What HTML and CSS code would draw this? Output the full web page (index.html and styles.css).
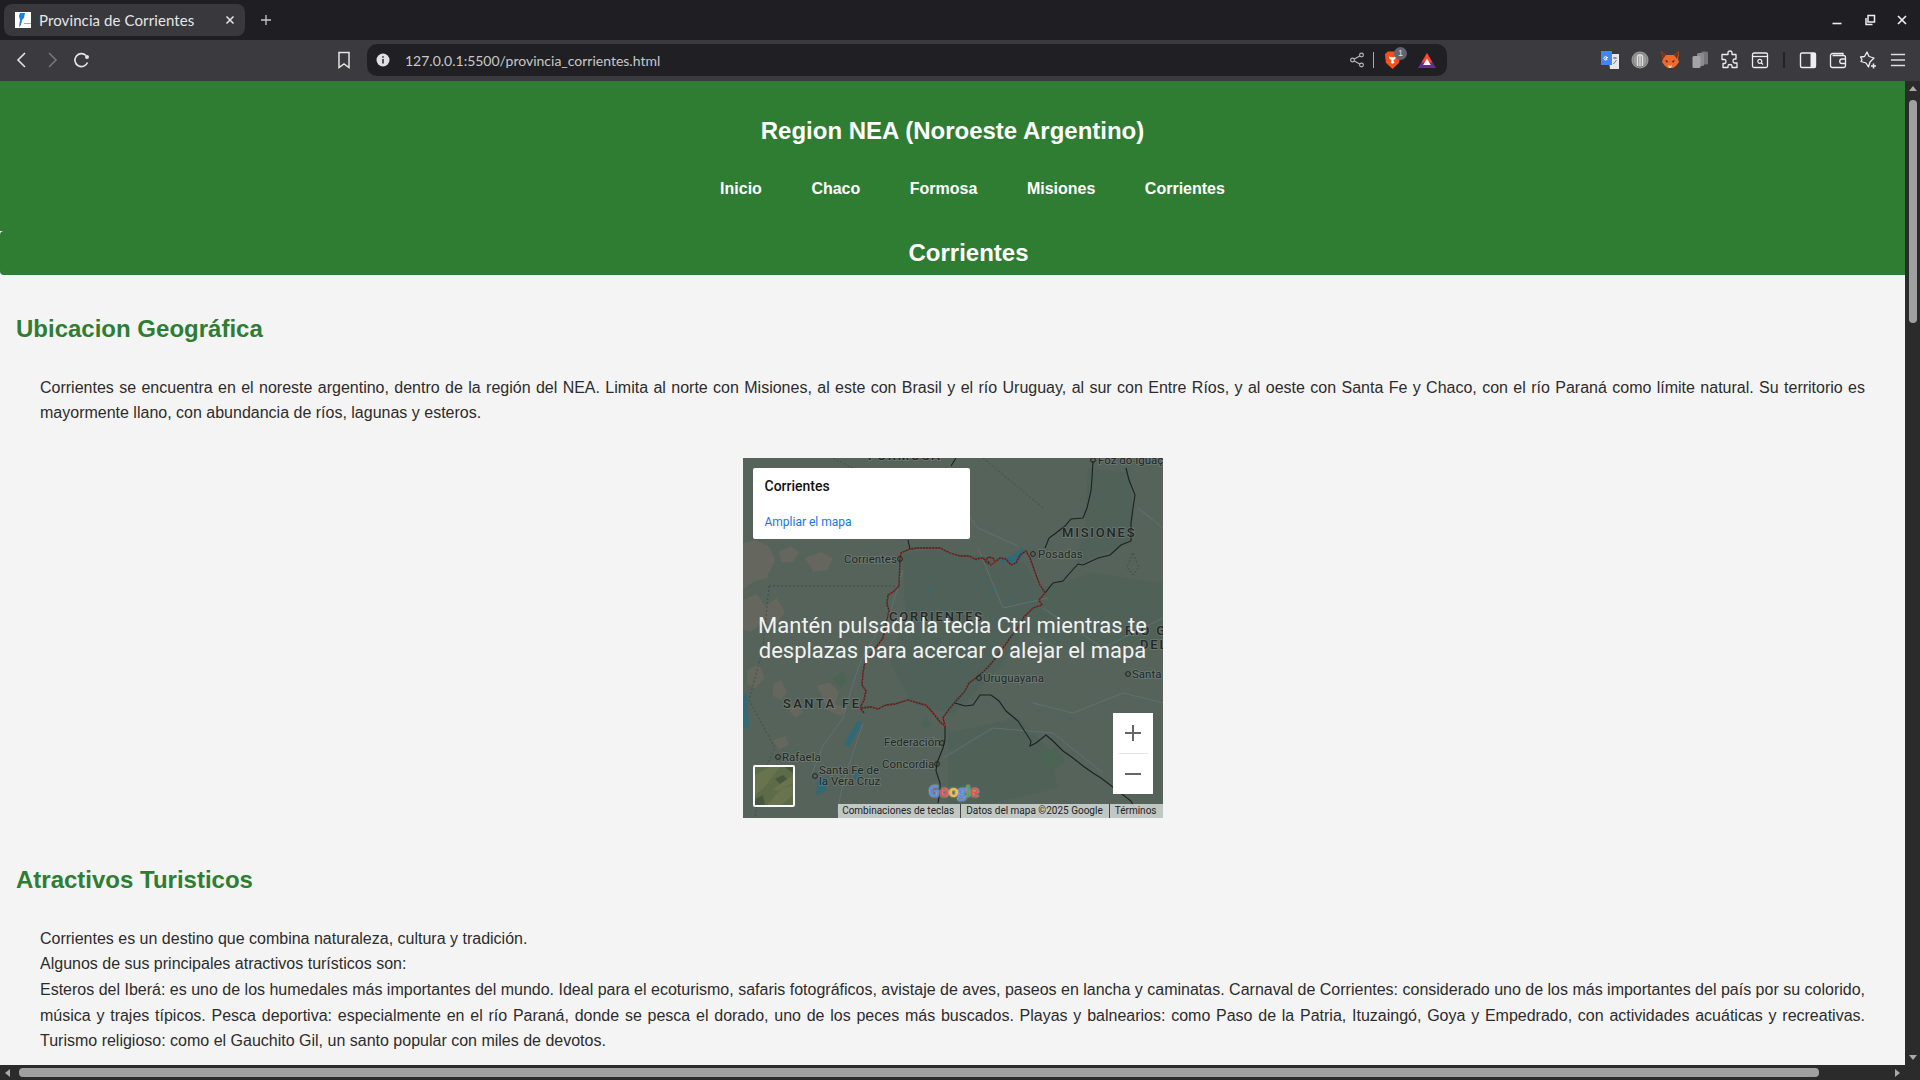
FILE: index.html
```html
<!DOCTYPE html>
<html lang="es">

<head>
  <meta charset="UTF-8">
  <title>Provincia de Corrientes</title>
  <link rel="stylesheet" href="styles.css">
</head>

<body>
  <div class="browser">

    <!-- Tabs -->
    <div class="tabstrip">
      <div class="tab">
        <svg class="favicon" viewBox="0 0 16 16">
          <rect width="16" height="16" fill="#fff"/>
          <path d="M5 1h5L9 6 7 8 6 13 4 15 5 8 4 4z" fill="#1c7fd6"/>
          <path d="M9 11h7v1H9z" fill="#9aa"/>
        </svg>
        <span class="tab-title">Provincia de Corrientes</span>
        <svg class="tab-close" viewBox="0 0 10 10"><path d="M1.500 1.500l7 7M8.500 1.500l-7 7" stroke="#e8e8e8" stroke-width="1.500"/></svg>
      </div>
      <svg class="tab-new" viewBox="0 0 12 12"><path d="M6 1v10M1 6h10" stroke="#c8c8c8" stroke-width="1.300"/></svg>
      <div class="window-btns">
        <svg viewBox="0 0 12 12"><path d="M1.500 9.500h9" stroke="#eee" stroke-width="1.600"/></svg>
        <svg viewBox="0 0 12 12"><path d="M4 1.500h6.500v6.500H4zM2 4v6.500h6.500" fill="none" stroke="#eee" stroke-width="1.500"/></svg>
        <svg viewBox="0 0 12 12"><path d="M2 2l8 8M10 2l-8 8" stroke="#eee" stroke-width="1.700"/></svg>
      </div>
    </div>

    <!-- Toolbar -->
    <div class="toolbar">
      <div class="tool-btn"><svg viewBox="0 0 20 20"><path d="M13 3l-7 7 7 7" fill="none" stroke="#e4e4e4" stroke-width="1.600"/></svg></div>
      <div class="tool-btn"><svg viewBox="0 0 20 20"><path d="M7 3l7 7-7 7" fill="none" stroke="#77777b" stroke-width="1.600"/></svg></div>
      <div class="tool-btn"><svg viewBox="0 0 20 20"><path d="M15.500 12.500A6.500 6.500 0 1 1 14 5.500" fill="none" stroke="#e4e4e4" stroke-width="1.600"/><circle cx="15" cy="7" r="2" fill="#e4e4e4"/></svg></div>
      <div class="tool-btn bookmark"><svg viewBox="0 0 20 20"><path d="M5 2.500h10v15l-5-3.500-5 3.500z" fill="none" stroke="#e4e4e4" stroke-width="1.500"/></svg></div>

      <div class="urlbar">
        <svg class="url-info" viewBox="0 0 14 14"><circle cx="7" cy="7" r="6.500" fill="#e0e0e0"/><path d="M7 6v4.500M7 3.300v1.500" stroke="#222" stroke-width="1.500"/></svg>
        <span class="url-text">127.0.0.1:5500/provincia_corrientes.html</span>
        <svg class="url-share" viewBox="0 0 16 16"><path d="M12.500 3L3.500 8l9 5" fill="none" stroke="#bbb" stroke-width="1.100"/><circle cx="12.500" cy="3" r="1.900" fill="#202024" stroke="#bbb" stroke-width="1.100"/><circle cx="3.500" cy="8" r="1.900" fill="#202024" stroke="#bbb" stroke-width="1.100"/><circle cx="12.500" cy="13" r="1.900" fill="#202024" stroke="#bbb" stroke-width="1.100"/></svg>
        <span class="url-sep"></span>
        <div class="brave">
          <svg viewBox="0 0 18 20"><path d="M4 1h10l3 3-1 9-7 6.500L2 13 1 4z" fill="#f4511e"/><path d="M5 6l3 1h2l3-1-1 3-2 1 1 3-2 1-2-1 1-3-2-1z" fill="#fff"/></svg>
          <span class="brave-badge">1</span>
        </div>
        <svg class="bat" viewBox="0 0 18 15"><path d="M9 0l9 15H0z" fill="#662d91"/><path d="M9 0l5.500 9.500h-11z" fill="#ff4724"/><path d="M9 5.500l3.800 6.500H5.200z" fill="#fff"/></svg>
      </div>

      <div class="ext-icons">
        <div class="tool-btn"><svg viewBox="0 0 20 20"><path d="M8 4h11v15H10z" fill="#e8e8e8"/><path d="M13 8h4M15 7v2M13.500 14l3-4" stroke="#777" stroke-width="1"/><path d="M1 1h11v14H1z" fill="#4285f4"/><path d="M8 7.500H6v1.500h1.200a1.700 1.700 0 1 1-.5-2" fill="none" stroke="#fff" stroke-width="1"/></svg></div>
        <div class="tool-btn"><svg viewBox="0 0 20 20"><circle cx="10" cy="10" r="8.500" fill="#9c9c9c"/><circle cx="10" cy="10" r="7" fill="none" stroke="#777" stroke-width=".8"/><path d="M7.500 16V7c0-3 5-3 5 0v9M10 5v11" fill="none" stroke="#e2e2e2" stroke-width="1.200"/></svg></div>
        <div class="tool-btn"><svg viewBox="0 0 20 20"><path d="M1 1l5 4h8l5-4-1 8 1 3-3 4-3 2H8l-3-2-3-4 1-3z" fill="#f0692a"/><path d="M1 1l5 4-3 4zM19 1l-5 4 3 4z" fill="#7a3410"/><path d="M5 10l3 1-1 2zM15 10l-3 1 1 2z" fill="#3a2a20"/><path d="M8 15l2 1 2-1-1 3H9z" fill="#dcd2c8"/></svg></div>
        <div class="tool-btn"><svg viewBox="0 0 20 20"><rect x="11" y="1.500" width="7" height="13" rx="1.500" fill="#77777a"/><rect x="7" y="3" width="7" height="13" rx="1.500" fill="#8c8c8e"/><rect x="2.500" y="6" width="8" height="12" rx="1.500" fill="#a4a4a6"/></svg></div>
        <div class="tool-btn"><svg viewBox="0 0 20 20"><path d="M8 2.500c0-2 4-2 4 0v2h4v4.500h-1.500c-2 0-2 4 0 4H17v4.500h-5v-1.500c0-2-4-2-4 0v1.500H3v-4h1.500c2 0 2-4 0-4H2v-5h6z" fill="none" stroke="#eee" stroke-width="1.300" stroke-linejoin="round"/></svg></div>
        <div class="tool-btn"><svg viewBox="0 0 20 20"><rect x="2.500" y="3" width="15" height="14.500" rx="1.500" fill="none" stroke="#eee" stroke-width="1.300"/><path d="M2.500 6.500h15" stroke="#eee" stroke-width="1.300"/><circle cx="9.800" cy="11.300" r="2" fill="none" stroke="#eee" stroke-width="1.200"/><path d="M11.300 12.800l1.700 1.700" stroke="#eee" stroke-width="1.200"/></svg></div>
        <span class="tool-sep"></span>
        <div class="tool-btn"><svg viewBox="0 0 20 20"><rect x="2.500" y="3" width="15" height="14.500" rx="1.500" fill="none" stroke="#eee" stroke-width="1.400"/><rect x="12.500" y="3" width="5" height="14.500" fill="#eee"/></svg></div>
        <div class="tool-btn"><svg viewBox="0 0 20 20"><path d="M15 5.500V3.500H4.500a2 2 0 0 0-2 2v10a2 2 0 0 0 2 2h11a2 2 0 0 0 2-2v-8a2 2 0 0 0-2-2H4.500" fill="none" stroke="#eee" stroke-width="1.300"/><path d="M17.500 9H14a2 2 0 0 0 0 4.500h3.500" fill="none" stroke="#eee" stroke-width="1.300"/></svg></div>
        <div class="tool-btn"><svg viewBox="0 0 20 20"><path d="M9 2l2 4.500 5 1.500-4 4-1.500 5L8 13 3 11.500l1-2L2.500 7l4-.5z" fill="none" stroke="#eee" stroke-width="1.300" stroke-linejoin="round"/><path d="M15.500 13.500v5M13 16h5" stroke="#eee" stroke-width="1.500"/></svg></div>
        <div class="tool-btn"><svg viewBox="0 0 20 20"><path d="M3 4.500h14M3 10h14M3 15.500h14" stroke="#ddd" stroke-width="1.500"/></svg></div>
      </div>
    </div>

    <!-- Page -->
    <div class="viewport">
      <div class="page">
        <header class="site-header">
          <h1>Region NEA (Noroeste Argentino)</h1>
          <nav>
            <ul class="site-nav">
              <li><a href="#">Inicio</a></li>
              <li><a href="#">Chaco</a></li>
              <li><a href="#">Formosa</a></li>
              <li><a href="#">Misiones</a></li>
              <li><a href="#">Corrientes</a></li>
            </ul>
          </nav>
        </header>
        <h2 class="province-title">Corrientes</h2>

        <main>
          <h2 class="section-title">Ubicacion Geográfica</h2>
          <p class="section-text">Corrientes se encuentra en el noreste argentino, dentro de la región del NEA. Limita al norte con Misiones, al este con Brasil y el río Uruguay, al sur con Entre Ríos, y al oeste con Santa Fe y Chaco, con el río Paraná como límite natural. Su territorio es mayormente llano, con abundancia de ríos, lagunas y esteros.</p>

          <div class="map">
            <svg class="map-base" viewBox="0 0 420 360">
              <defs>
                <path id="limit" d="M157 100L158 95 167 91 175 90 190 90 197 90 207 95 217 98 226 98 232 101 240 100 243 104 248 107 252 104 250 100 246 99 243 101 248 107 257 100 263 101 268 107 273 105 277 97 283 93 287 100 293 117 297 127 302 135 296 142 299 147 290 150 285 155 281 159 274 171 267 180 258 193 247 207 240 214 233 220 226 225 222 233 213 243 207 250 200 260 202 268M157 100L156 128 150 134 145 137 144 146 146 153 142 170 140 180 131 192 122 203 120 215 119 227 123 233 121 242 117 250 121 255M117 250L128 249 135 251 143 247 152 246 165 242 175 245 183 247 190 255 197 264 202 268"/>
              </defs>
              <rect width="420" height="360" fill="#55635b"/>
              <!-- land patches -->
              <path class="map-patch" d="M0 85l12-3 14 6 6 14-8 18-14 4-10 8zM36 94l12-6 8 6-6 10-12 0zM62 100l16-6 12 6-6 12-14 2zM0 142l14-6 8 12 12-8 8 14-10 14-12-4-12 10-8-2zM4 212l12-6 6 14-10 10-8-4zM30 226l8-4 6 12-6 8-8-4zM74 228l12-4 10 10-4 12 12 4-6 8-14-6-4-12zM44 250l10-4 6 8-8 6zM30 282l12-4 4 8-10 6z"/>
              <path class="map-green" d="M345 10l40 5 6 40-6 28-26 14-25 8 8-40zM300 130l50-15 70 10v60l-90 10-50-25zM205 275l70-15 30 30 10 40-110 25z"/>
              <path class="map-teal" d="M160 96l30-4 90 12 20 32-40 70-50 50-40-10-22-40 14-50z"/>
              <path class="map-dark" d="M300 295l14-6 8 14-10 8-12-4zM90 220l10-6 4 10-8 6zM178 265l6-6 4 8-6 4z"/>
              <!-- water -->
              <path class="map-water" d="M0 238l4-2 2 32-6 4zM101 286l14-24 4 3-13 24zM75 323l10-5-2 14-10 6zM110 318l6-8 2 4-6 8z"/>
              <path class="map-water" d="M257 100l12-2 10-8 4 3-6 8-7 6-5-4-6 1z"/>
              <path class="map-water" d="M248 130l4 4-5 1zM183 134l6-6-4 8zM268 137l2 6-3-1z"/>
              <!-- rivers -->
              <path class="map-river" d="M125 10l30 50 10 22M205 30l30 40 40 18M160 112l-12 40-30 50-10 30-8 28-20 28-12 30M235 90l25 60 45-10M300 150l60 40 60-30M290 245l40 10 50-20 40 10M200 300l50-30 60 5 50 40M395 50l25 20M120 265l-20 60-6 30"/>
              <!-- dashed lines -->
              <path class="map-dash" d="M26 128H155M26 128l-6 62-14 52 26 48-14 30-6 40M240 0l60 50M390 95l-6 14 6 8 6-8zM90 0l20 10"/>
              <!-- borders -->
              <path class="map-border" d="M350 3L349 20 348 33 344 50 340 60 328 61 322 68 313 75 306 80 302 90M383 10L386 22 392 37 390 50 388 65 388 83 378 87 367 97 355 100 340 107 335 106 325 117 320 123 310 125 302 135M212 245L222 248 230 247 237 237 248 237 256 243 263 253 275 263 288 283 287 288 293 285 303 277 310 283 320 293 330 300 340 308 350 315 358 320 375 333 388 343 393 353M202 268L202 282 200 290 194 305 193 313 197 325 197 333 195 345M213 0L208 8M165 82L167 91"/>
              <use class="map-limit-under" href="#limit"/>
              <use class="map-limit" href="#limit"/>
              <!-- labels -->
              <text class="map-label-big" x="125" y="2">FORMOSA</text>
              <text class="map-label-big" x="319" y="79">MISIONES</text>
              <text class="map-label-big" x="146" y="163">CORRIENTES</text>
              <text class="map-label-big label-wide" x="40" y="250">SANTA FE</text>
              <text class="map-label-big" x="382" y="177">RÍO G</text>
              <text class="map-label-big" x="397" y="191">DEL</text>
              <text class="map-label" x="355" y="6">Foz do Iguaçu</text>
              <text class="map-label" x="101" y="105">Corrientes</text>
              <text class="map-label" x="295" y="100">Posadas</text>
              <text class="map-label" x="240" y="224">Uruguayana</text>
              <text class="map-label" x="389" y="220">Santa</text>
              <text class="map-label" x="141" y="288">Federación</text>
              <text class="map-label" x="139" y="310">Concordia</text>
              <text class="map-label" x="39" y="303">Rafaela</text>
              <text class="map-label" x="76" y="316">Santa Fe de</text>
              <text class="map-label" x="76" y="327">la Vera Cruz</text>
              <!-- city dots -->
              <circle class="map-dot" cx="157" cy="101" r="2.400"/>
              <circle class="map-dot" cx="290" cy="96" r="2.400"/>
              <circle class="map-dot" cx="236" cy="220" r="2.400"/>
              <circle class="map-dot" cx="385" cy="216" r="2.400"/>
              <circle class="map-dot" cx="199" cy="285" r="2.400"/>
              <circle class="map-dot" cx="194" cy="306" r="2.400"/>
              <circle class="map-dot" cx="35" cy="299" r="2.400"/>
              <circle class="map-dot" cx="72" cy="318" r="2.400"/>
              <circle class="map-dot" cx="350" cy="2" r="2.400"/>
            </svg>

            <div class="map-veil">Mantén pulsada la tecla Ctrl mientras te desplazas para acercar o alejar el mapa</div>

            <div class="map-card">
              <div class="map-card-title">Corrientes</div>
              <a class="map-card-link" href="#">Ampliar el mapa</a>
            </div>

            <div class="map-thumb">
              <svg viewBox="0 0 38 38"><rect width="38" height="38" fill="#5d6b48"/><path d="M0 8l15-8h10L8 22 0 28zM38 8v8L22 24l-4-2zM12 38l14-16 12-4v10l-12 10z" fill="#69744f"/><path d="M20 12l8-4 4 4-7 5zM0 32l8-4 2 10H0zM30 0h8v6z" fill="#47563c"/></svg>
            </div>

            <div class="map-zoom">
              <div class="map-zoom-btn"><svg viewBox="0 0 18 18"><path d="M9 1v16M1 9h16" stroke="#666" stroke-width="2"/></svg></div>
              <div class="map-zoom-line"></div>
              <div class="map-zoom-btn"><svg viewBox="0 0 18 18"><path d="M1 9h16" stroke="#666" stroke-width="2"/></svg></div>
            </div>

            <div class="map-google"><span class="g-blue">G</span><span class="g-red">o</span><span class="g-yellow">o</span><span class="g-blue">g</span><span class="g-green">l</span><span class="g-red">e</span></div>

            <div class="map-footer">
              <span>Combinaciones de teclas</span>
              <span>Datos del mapa ©2025 Google</span>
              <span>Términos</span>
            </div>
          </div>

          <h2 class="section-title section-second">Atractivos Turisticos</h2>
          <p class="section-text">Corrientes es un destino que combina naturaleza, cultura y tradición.<br>
            Algunos de sus principales atractivos turísticos son:<br>
            Esteros del Iberá: es uno de los humedales más importantes del mundo. Ideal para el ecoturismo, safaris fotográficos, avistaje de aves, paseos en lancha y caminatas. Carnaval de Corrientes: considerado uno de los más importantes del país por su colorido, música y trajes típicos. Pesca deportiva: especialmente en el río Paraná, donde se pesca el dorado, uno de los peces más buscados. Playas y balnearios: como Paso de la Patria, Ituzaingó, Goya y Empedrado, con actividades acuáticas y recreativas. Turismo religioso: como el Gauchito Gil, un santo popular con miles de devotos.</p>
        </main>
      </div>

      <div class="vscroll">
        <span class="arrow-up"></span>
        <div class="vscroll-track"><div class="vscroll-thumb"></div></div>
        <span class="arrow-down"></span>
      </div>
    </div>

    <div class="hscroll">
      <span class="arrow-left"></span>
      <div class="hscroll-track"><div class="hscroll-thumb"></div></div>
      <span class="arrow-right"></span>
      <span class="hscroll-corner"></span>
    </div>

  </div>
</body>

</html>
```

FILE: styles.css
```css
* {
  box-sizing: border-box;
}

html,
body {
  margin: 0;
  height: 100%;
  overflow: hidden;
}

body {
  font-family: "Liberation Sans", Arial, sans-serif;
  background: #f4f4f4;
  color: #2c2c2c;
}

.browser {
  display: flex;
  flex-direction: column;
  height: 1080px;
}

/* Tabs */

.tabstrip {
  display: flex;
  align-items: center;
  height: 40px;
  flex: none;
  padding: 4px 0 4px 4px;
  background: #1f1f23;
}

.tab {
  display: flex;
  align-items: center;
  width: 241px;
  height: 32px;
  padding: 0 10px 0 11px;
  border-radius: 8px;
  background: #38383d;
}

.favicon {
  width: 16px;
  height: 16px;
  flex: none;
}

.tab-title {
  flex: 1;
  margin-left: 8px;
  padding-bottom: 1px;
  font-family: Lato, sans-serif;
  font-size: 15px;
  letter-spacing: 0.1px;
  color: #e6e6e6;
  white-space: nowrap;
}

.tab-close {
  width: 10px;
  height: 10px;
}

.tab-new {
  width: 12px;
  height: 12px;
  margin-left: 15px;
}

.window-btns {
  display: flex;
  gap: 20.500px;
  margin-left: auto;
  padding-right: 12px;
}

.window-btns svg {
  width: 12px;
  height: 12px;
}

/* Toolbar */

.toolbar {
  display: flex;
  align-items: center;
  height: 41px;
  flex: none;
  padding: 0 0 1px 7px;
  background: #3a3a3f;
}

.tool-btn {
  display: flex;
  align-items: center;
  justify-content: center;
  width: 30px;
  height: 30px;
  flex: none;
}

.tool-btn svg {
  width: 20px;
  height: 20px;
}

.bookmark {
  margin-left: 232px;
}

.urlbar {
  display: flex;
  align-items: center;
  width: 1080px;
  height: 32px;
  margin-left: 8px;
  padding: 0 11px 0 9px;
  border-radius: 10px;
  background: #202024;
}

.url-info {
  width: 14px;
  height: 14px;
}

.url-text {
  flex: 1;
  margin-left: 15px;
  font-family: Lato, sans-serif;
  font-size: 14px;
  color: #c8c8c8;
}

.url-share {
  width: 16px;
  height: 16px;
}

.url-sep {
  width: 1px;
  height: 16px;
  margin: 0 10px 0 8px;
  background: #aaa;
}

.brave {
  position: relative;
  width: 18px;
  height: 20px;
}

.brave svg {
  display: block;
  width: 17px;
  height: 20px;
}

.brave-badge {
  position: absolute;
  top: -3px;
  left: 10px;
  width: 13px;
  height: 13px;
  border-radius: 50%;
  background: #63646e;
  color: #ddd;
  font-size: 9px;
  line-height: 13px;
  text-align: center;
}

.bat {
  width: 18px;
  height: 15px;
  margin-left: 16px;
}

.ext-icons {
  display: flex;
  align-items: center;
  margin-left: 148px;
}

.tool-sep {
  width: 2px;
  height: 16px;
  margin: 0 8px;
  background: #222;
}

/* Page */

.viewport {
  display: flex;
  flex: 1;
  min-height: 0;
}

.page {
  flex: 1;
  min-width: 0;
  overflow: hidden;
  background: #f4f4f4;
}

.site-header {
  height: 150px;
  padding-top: 34px;
  background: #2e7d32;
  color: #fff;
  text-align: center;
}

.site-header h1 {
  margin: 0;
  font-size: 24px;
  line-height: 32px;
}

.site-nav {
  display: flex;
  justify-content: center;
  gap: 49.500px;
  margin: 33px 0 0;
  padding: 0 0 0 40px;
  list-style: none;
}

.site-nav a {
  color: #fff;
  font-size: 16px;
  font-weight: bold;
  line-height: 18px;
  text-decoration: none;
}

.province-title {
  width: calc(100% + 32px);
  height: 44px;
  margin: 0;
  border-radius: 4px;
  background: #2e7d32;
  color: #fff;
  font-size: 24px;
  line-height: 44px;
  text-align: center;
}

.section-title {
  margin: 0;
  padding: 40px 0 0 16px;
  color: #2e7d32;
  font-size: 24px;
  line-height: 28px;
}

.section-second {
  padding-top: 48px;
}

.section-text {
  margin: 31.700px 40px 0;
  font-size: 16px;
  line-height: 25.600px;
  text-align: justify;
}

/* Map */

.map {
  position: relative;
  width: 420px;
  height: 360px;
  margin: 32.300px auto 0;
  overflow: hidden;
  font-family: Roboto, sans-serif;
}

.map-base {
  display: block;
  width: 420px;
  height: 360px;
}

.map-patch {
  fill: #65665d;
}

.map-green {
  fill: #4f6157;
  opacity: 0.7;
}

.map-teal {
  fill: #506159;
}

.map-dark {
  fill: #4c6454;
}

.map-water {
  fill: #2f6a78;
}

.map-river {
  fill: none;
  stroke: #62747a;
  stroke-width: 0.8;
}

.map-dash {
  fill: none;
  stroke: #3a4340;
  stroke-width: 0.7;
  stroke-dasharray: 2 2;
}

.map-border {
  fill: none;
  stroke: #1c2120;
  stroke-width: 1.100;
}

.map-limit-under {
  fill: none;
  stroke: #2f2b28;
  stroke-width: 1.300;
}

.map-limit {
  fill: none;
  stroke: #a5302a;
  stroke-width: 1.300;
  stroke-dasharray: 1.500 1.500;
}

.map-dot {
  fill: none;
  stroke: #1f2422;
  stroke-width: 1;
}

.map-label,
.map-label-big {
  font-family: Roboto, sans-serif;
  fill: #232625;
  paint-order: stroke;
  stroke: rgba(255, 255, 255, 0.12);
  stroke-width: 2px;
}

.map-label {
  font-size: 11.500px;
}

.map-label-big {
  font-size: 13px;
  font-weight: 500;
  letter-spacing: 1.800px;
}

.label-wide {
  letter-spacing: 2.400px;
}

.map-veil {
  position: absolute;
  top: 0;
  left: 0;
  display: flex;
  align-items: center;
  width: 100%;
  height: 100%;
  padding: 0 14px;
  color: #fff;
  font-size: 22px;
  line-height: 25px;
  text-align: center;
  opacity: 0.92;
}

.map-card {
  position: absolute;
  top: 10px;
  left: 10px;
  width: 217px;
  height: 71px;
  padding: 8px 12px;
  border-radius: 2px;
  background: #fff;
}

.map-card-title {
  color: #111;
  font-size: 14px;
  font-weight: 500;
  line-height: 20px;
}

.map-card-link {
  display: block;
  margin-top: 19px;
  color: #1a73e8;
  font-size: 12px;
  line-height: 14px;
  text-decoration: none;
}

.map-thumb {
  position: absolute;
  top: 307px;
  left: 10px;
  width: 42px;
  height: 42px;
  border: 2px solid #fff;
  border-radius: 2px;
  overflow: hidden;
}

.map-thumb svg {
  display: block;
  width: 38px;
  height: 38px;
}

.map-zoom {
  position: absolute;
  top: 255px;
  left: 370px;
  display: flex;
  flex-direction: column;
  align-items: center;
  width: 40px;
  height: 81px;
  background: #fff;
}

.map-zoom-btn {
  display: flex;
  align-items: center;
  justify-content: center;
  width: 40px;
  height: 40px;
}

.map-zoom-btn svg {
  width: 18px;
  height: 18px;
}

.map-zoom-line {
  width: 30px;
  height: 1px;
  background: #e6e6e6;
}

.map-google {
  position: absolute;
  top: 322px;
  left: 186px;
  font-family: "Open Sans", sans-serif;
  font-size: 16px;
  font-weight: 700;
  letter-spacing: -0.800px;
  line-height: 22px;
  text-shadow: 0 0 2px rgba(255, 255, 255, 0.7);
}

.g-blue {
  color: #5b8de8;
}

.g-red {
  color: #e2574c;
}

.g-yellow {
  color: #eebf3a;
}

.g-green {
  color: #4aa564;
}

.map-footer {
  position: absolute;
  right: 0;
  bottom: 0;
  display: flex;
  height: 14px;
  background: rgba(220, 225, 223, 0.8);
  color: #222;
  font-size: 10px;
  line-height: 14px;
}

.map-footer span {
  padding: 0 6px 0 5px;
  border-left: 1px solid #444;
  white-space: nowrap;
}

.map-footer span:first-child {
  padding-left: 4px;
  border-left: 0;
}

/* Scrollbars */

.vscroll {
  display: flex;
  flex-direction: column;
  align-items: center;
  width: 15px;
  flex: none;
  background: #2b2b2b;
}

.vscroll-track {
  flex: 1;
  width: 100%;
  padding: 4px 3px;
}

.vscroll-thumb {
  width: 8px;
  height: 223px;
  margin: 0 auto;
  border-radius: 4px;
  background: #a0a0a0;
}

.hscroll {
  display: flex;
  align-items: center;
  height: 15px;
  flex: none;
  background: #2b2b2b;
}

.hscroll-track {
  flex: 1;
  padding: 0 71px 0 4px;
}

.hscroll-thumb {
  height: 9px;
  border-radius: 4px;
  background: #a0a0a0;
}

.hscroll-corner {
  width: 15px;
  height: 15px;
  flex: none;
}

.arrow-up,
.arrow-down {
  width: 0;
  height: 0;
  margin: 5px 0;
  border-right: 4px solid transparent;
  border-left: 4px solid transparent;
  flex: none;
}

.arrow-up {
  border-bottom: 5px solid #aaa;
}

.arrow-down {
  border-top: 5px solid #aaa;
}

.arrow-left,
.arrow-right {
  width: 0;
  height: 0;
  margin: 0 5px;
  border-top: 4px solid transparent;
  border-bottom: 4px solid transparent;
  flex: none;
}

.arrow-left {
  border-right: 5px solid #aaa;
}

.arrow-right {
  border-left: 5px solid #aaa;
}
```
